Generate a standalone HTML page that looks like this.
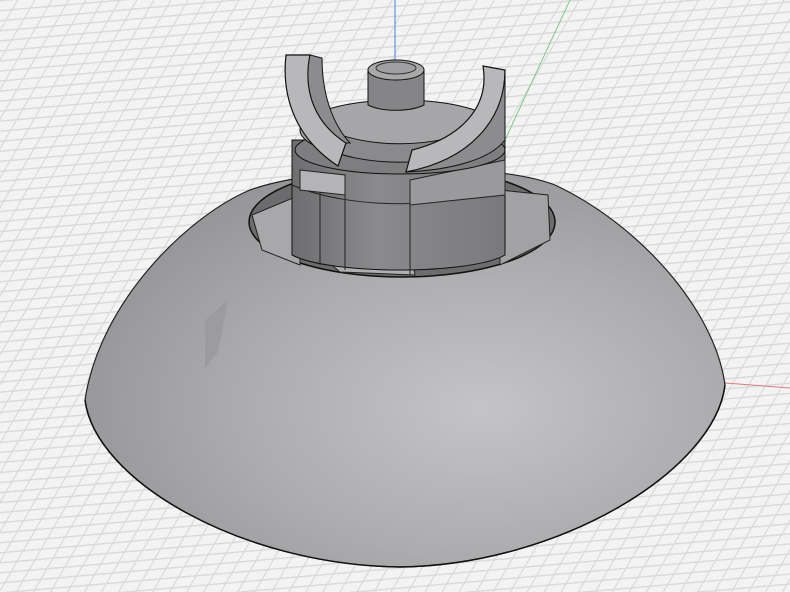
<!DOCTYPE html>
<html><head><style>html,body{margin:0;padding:0;background:#f1f1f1;overflow:hidden}svg{display:block}</style></head>
<body>
<svg width="790" height="592" viewBox="0 0 790 592" xmlns="http://www.w3.org/2000/svg">
<defs>
<pattern id="g" width="18" height="10" patternUnits="userSpaceOnUse" patternTransform="rotate(-5) skewX(-35)">
<rect width="18" height="10" fill="#f3f3f3"/>
<rect x="0" y="0" width="18" height="1.4" fill="#d9d9d9"/>
<rect x="0" y="0" width="1.4" height="10" fill="#d9d9d9"/>
</pattern>
<radialGradient id="dome" cx="0.62" cy="0.6" r="0.75">
<stop offset="0" stop-color="#c4c4c6"/><stop offset="0.5" stop-color="#acacae"/><stop offset="1" stop-color="#8e8e90"/>
</radialGradient>
<linearGradient id="cyl" x1="0" x2="1">
<stop offset="0" stop-color="#6e6e70"/><stop offset="0.4" stop-color="#8a8a8c"/><stop offset="1" stop-color="#7a7a7c"/>
</linearGradient>
</defs>
<rect width="790" height="592" fill="url(#g)"/>
<line x1="395" y1="0" x2="395" y2="62" stroke="#4a7fd8" stroke-width="1"/>
<line x1="570" y1="0" x2="505" y2="140" stroke="#7cc98a" stroke-width="1"/>
<line x1="725" y1="383" x2="790" y2="388" stroke="#e07a7a" stroke-width="1"/>
<path d="M85 400 C100 300 190 215 250 190 C320 165 490 160 555 185 C640 225 715 310 725 385 C715 470 560 565 400 567 C240 565 95 480 85 400Z" fill="url(#dome)" stroke="#222" stroke-width="1.2"/>
<path d="M85 400 C95 480 240 565 400 567 C560 565 715 470 725 385" fill="none" stroke="#111" stroke-width="1.5"/>
<path d="M205 320 L228 300 L218 352 L205 368Z" fill="#9c9c9e"/>
<ellipse cx="402" cy="222" rx="153" ry="55" fill="#6c6c6e" stroke="#111" stroke-width="1.5"/>
<path d="M252 215 L300 195 L300 265 L262 250Z" fill="#a8a8aa" stroke="#222"/>
<path d="M500 190 L548 195 L550 240 L500 265Z" fill="#a2a2a4" stroke="#222"/>
<path d="M320 255 L410 248 L415 275 L340 272Z" fill="#b0b0b2" stroke="#222"/>
<path d="M292 140 L505 140 L505 255 C470 275 330 275 292 255Z" fill="url(#cyl)" stroke="#111"/>
<path d="M292 185 C350 210 450 210 505 185" fill="none" stroke="#222"/>
<path d="M345 195 L345 270 M410 200 L410 275 M320 180 L320 265" stroke="#222" fill="none"/>
<path d="M300 170 L345 175 L345 195 L300 190Z" fill="#b4b4b6" stroke="#222"/>
<path d="M410 180 L505 160 L505 195 L410 205Z" fill="#9a9a9c" stroke="#222"/>
<ellipse cx="400" cy="150" rx="105" ry="24" fill="#7e7e80" stroke="#111"/>
<ellipse cx="400" cy="130" rx="100" ry="30" fill="#a6a6a8" stroke="#111"/>
<path d="M318 125 C360 150 440 150 482 125 L482 145 C440 168 360 168 318 145Z" fill="#8a8a8c" stroke="#111"/>
<path d="M368 70 L424 70 L424 105 C410 112 382 112 368 105Z" fill="#858587" stroke="#111"/>
<ellipse cx="396" cy="70" rx="28" ry="10" fill="#a8a8aa" stroke="#111"/>
<ellipse cx="396" cy="68" rx="20" ry="6" fill="#a0a0a2" stroke="#333"/>
<path d="M286 55 L310 55 C302 95 318 125 346 143 L338 166 C298 140 281 100 286 55Z" fill="#b8b8ba" stroke="#111" stroke-width="1.2"/>
<path d="M310 55 L322 58 C322 100 336 128 350 143 L346 143 C318 125 302 95 310 55Z" fill="#8c8c8e" stroke="#111"/>
<path d="M483 66 L505 70 C505 120 470 160 406 172 L412 150 C460 138 490 108 483 66Z" fill="#b8b8ba" stroke="#111" stroke-width="1.2"/>
<path d="M505 70 L505 140 C490 160 450 170 406 172 C470 160 505 120 505 70Z" fill="#8c8c8e" stroke="#111"/>
</svg>
</body></html>
